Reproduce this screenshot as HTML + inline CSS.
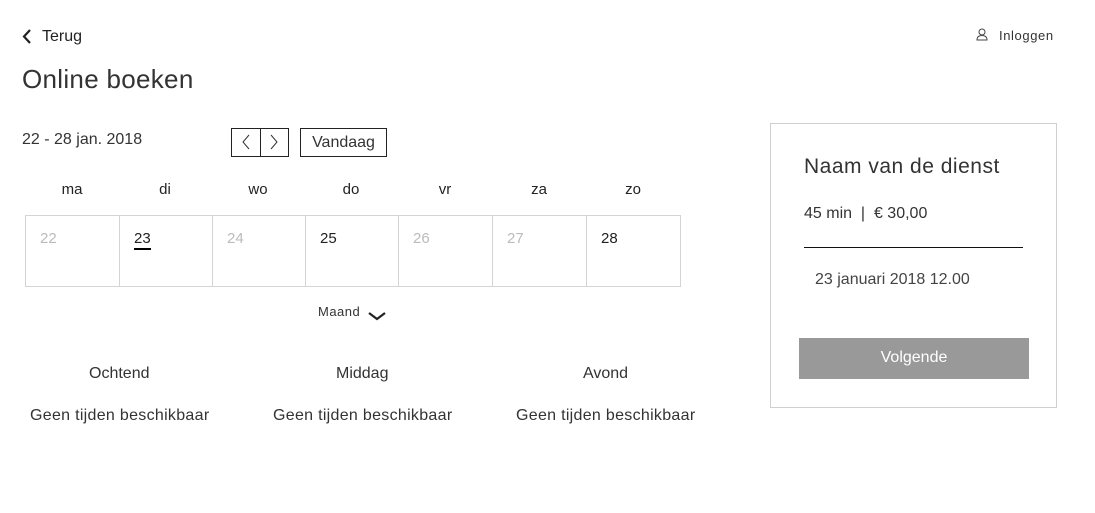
<!DOCTYPE html>
<html><head><meta charset="utf-8"><style>
*{margin:0;padding:0;box-sizing:border-box}
body{width:1095px;height:513px;background:#fff;font-family:"Liberation Sans",sans-serif;color:#222;position:relative;overflow:hidden}
.a{position:absolute;white-space:nowrap}
.cell{position:absolute;top:215px;height:72px;border:1px solid #d4d4d4;font-size:15px;padding:14px 0 0 14px}
.g{color:#bbb}
.day{position:absolute;top:181px;font-size:15px;width:94px;text-align:center}
</style></head><body>
<svg class="a" style="left:21px;top:28px" width="12" height="17" viewBox="0 0 12 17"><path d="M9 2 L3 8.5 L9 15" stroke="#222" stroke-width="2.2" fill="none"/></svg>
<div class="a" style="left:42px;top:28px;font-size:16px">Terug</div>
<div class="a" style="left:22px;top:64px;font-size:26px;color:#333;letter-spacing:0.3px">Online boeken</div>
<svg class="a" style="left:976px;top:28px" width="12" height="13" viewBox="0 0 12 13"><circle cx="6" cy="4" r="3" stroke="#444" fill="none"/><path d="M1 12 Q1 7.5 6 7.5 Q11 7.5 11 12 Z" stroke="#444" fill="none"/></svg>
<div class="a" style="left:999px;top:28px;font-size:13px;color:#333;letter-spacing:0.6px">Inloggen</div>
<div class="a" style="left:22px;top:131px;font-size:16px;color:#333">22 - 28 jan. 2018</div>
<div class="a" style="left:231px;top:128px;width:58px;height:29px;border:1px solid #222"></div>
<div class="a" style="left:260px;top:128px;width:1px;height:29px;background:#222"></div>
<svg class="a" style="left:240px;top:134px" width="12" height="16"><path d="M9 1 L3 8 L9 15" stroke="#333" fill="none"/></svg>
<svg class="a" style="left:268px;top:134px" width="12" height="16"><path d="M3 1 L9 8 L3 15" stroke="#333" fill="none"/></svg>
<div class="a" style="left:300px;top:128px;width:87px;height:29px;border:1px solid #222;font-size:16px;text-align:center;line-height:27px;color:#333">Vandaag</div>
<div class="day" style="left:25px">ma</div><div class="day" style="left:118px">di</div><div class="day" style="left:211px">wo</div><div class="day" style="left:304px">do</div><div class="day" style="left:398px">vr</div><div class="day" style="left:492px">za</div><div class="day" style="left:586px">zo</div>
<div class="cell g" style="left:25px;width:95px">22</div>
<div class="cell" style="left:119px;width:94px"><span style="border-bottom:2px solid #000;padding-bottom:1px">23</span></div>
<div class="cell g" style="left:212px;width:94px">24</div>
<div class="cell" style="left:305px;width:94px">25</div>
<div class="cell g" style="left:398px;width:95px">26</div>
<div class="cell g" style="left:492px;width:95px">27</div>
<div class="cell" style="left:586px;width:95px">28</div>
<div class="a" style="left:318px;top:304px;font-size:13px;color:#333;letter-spacing:0.5px">Maand</div>
<svg class="a" style="left:367px;top:310px" width="20" height="12"><path d="M2 3 L10 9 L18 3" stroke="#222" stroke-width="2.2" fill="none"/></svg>
<div class="a" style="left:89px;top:365px;font-size:16px;color:#333">Ochtend</div>
<div class="a" style="left:336px;top:365px;font-size:16px;color:#333">Middag</div>
<div class="a" style="left:583px;top:365px;font-size:16px;color:#333">Avond</div>
<div class="a" style="left:30px;top:407px;font-size:16px;color:#333;letter-spacing:0.3px">Geen tijden beschikbaar</div>
<div class="a" style="left:273px;top:407px;font-size:16px;color:#333;letter-spacing:0.3px">Geen tijden beschikbaar</div>
<div class="a" style="left:516px;top:407px;font-size:16px;color:#333;letter-spacing:0.3px">Geen tijden beschikbaar</div>
<div class="a" style="left:770px;top:123px;width:287px;height:285px;border:1px solid #d0d0d0"></div>
<div class="a" style="left:804px;top:155px;font-size:21px;color:#333;letter-spacing:0.5px">Naam van de dienst</div>
<div class="a" style="left:804px;top:205px;font-size:16px;color:#333">45 min &nbsp;| &nbsp;€ 30,00</div>
<div class="a" style="left:804px;top:247px;width:219px;height:1px;background:#111"></div>
<div class="a" style="left:815px;top:271px;font-size:16px;color:#444">23 januari 2018 12.00</div>
<div class="a" style="left:799px;top:338px;width:230px;height:41px;background:#999;color:#fff;font-size:16px;text-align:center;line-height:40px">Volgende</div>
</body></html>
